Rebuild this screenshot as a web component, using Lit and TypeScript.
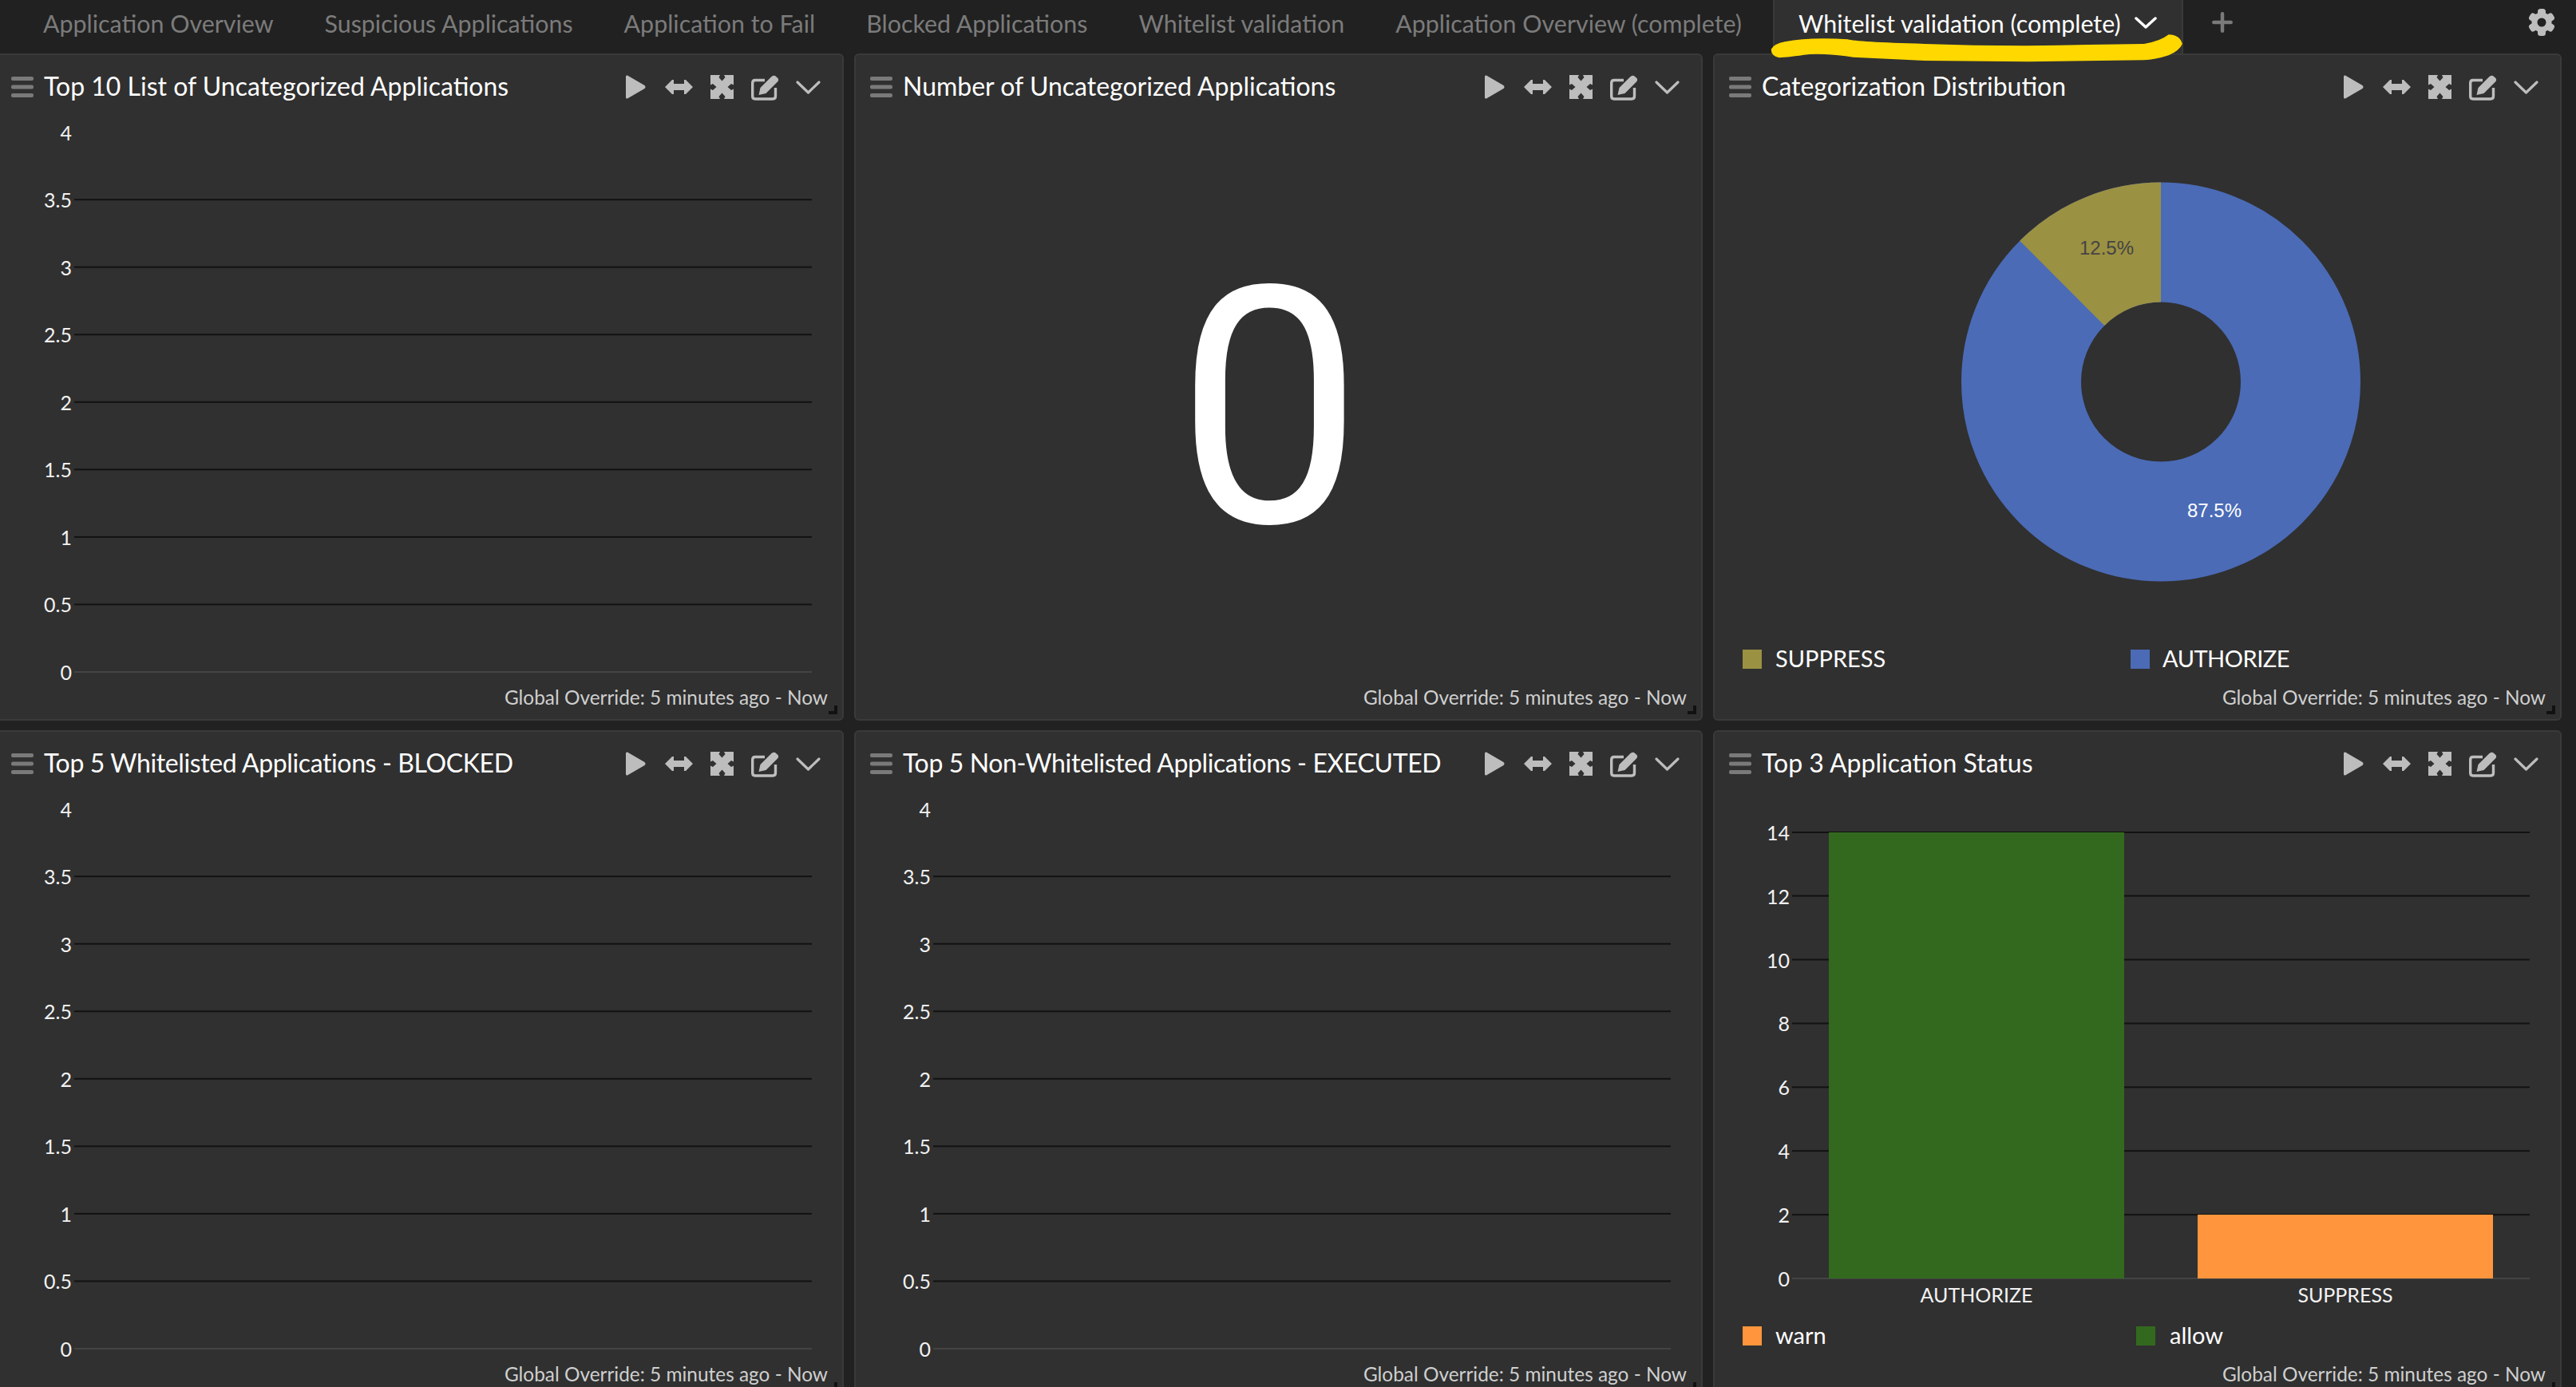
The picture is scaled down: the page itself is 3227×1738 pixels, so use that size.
import { LitElement, html, css, svg } from "lit";
import { customElement } from "lit/decorators.js";
import { classMap } from "lit/directives/class-map.js";

const TABS = [
  "Application Overview",
  "Suspicious Applications",
  "Application to Fail",
  "Blocked Applications",
  "Whitelist validation",
  "Application Overview (complete)",
];

const playIcon = html`<svg class="ic" style="width:25px;height:30px" viewBox="0 0 25 30"><path fill="#bdbdbd" d="M2 0.5 L23.5 13 Q25.5 15 23.5 17 L2 29.5 Q0 30 0 28 V2 Q0 0 2 .5Z"/></svg>`;
const arrowsIcon = html`<svg class="ic" style="width:35px;height:18px" viewBox="0 0 35 18"><path fill="#bdbdbd" d="M0 9 L9 0 H11 V5 H24 V0 H26 L35 9 L26 18 H24 V13 H11 V18 H9Z"/></svg>`;
const expandIcon = html`<svg class="ic" style="width:29px;height:30px" viewBox="0 0 29 30"><path fill="#bdbdbd" fill-rule="evenodd" d="M0 0H29V30H0Z M12 0 H17 L18.500 3 L14.500 7.500 L10.500 3Z M0 12.500 L3 11 L7.500 15 L3 19 L0 17.500Z M29 12.500 L26 11 L21.500 15 L26 19 L29 17.500Z M12 30 H17 L18.500 27 L14.500 22.500 L10.500 27Z"/></svg>`;
const editIcon = html`<svg class="ic" style="width:35px;height:33px" viewBox="0 0 35 33"><path fill="none" stroke="#bdbdbd" stroke-width="3.400" d="M17 7.500 H5 Q1.700 7.500 1.700 11 V27.500 Q1.700 31 5 31 H27 Q30.500 31 30.500 27.500 V17"/><path fill="#bdbdbd" d="M9.500 26 L11.500 17 L25.500 3 Q28 1 30 2 L33.500 5 Q35 7.500 33 9.500 L18.500 24Z"/></svg>`;
const chevIcon = html`<svg class="ic" style="width:31px;height:17px" viewBox="0 0 31 17"><path fill="none" stroke="#bdbdbd" stroke-width="3.200" stroke-linecap="round" stroke-linejoin="round" d="M2 2 L15.500 15 L29 2"/></svg>`;

function axis(ticks: string[], y0: number, step: number) {
  return ticks.map((t, i) => {
    const y = y0 - i * step;
    return svg`
      ${i === ticks.length - 1 ? "" : svg`<rect class=${i === 0 ? "base" : "grid"} x="99" y=${y - 1} width="924" height="2"></rect>`}
      <text class="tick" x="96" y=${y} text-anchor="end" dominant-baseline="central">${t}</text>`;
  });
}

function lineChart() {
  const ticks = ["0", "0.5", "1", "1.5", "2", "2.5", "3", "3.5", "4"];
  return html`<svg class="chart" viewBox="0 0 1063 699">${axis(ticks, 693, 84.55)}</svg>`;
}

function numberChart() {
  return html`<div class="bignum">0</div>`;
}

function donut() {
  const cx = 561, cy = 329.6, R = 250, r = 100;
  const d = R * Math.SQRT1_2, e = r * Math.SQRT1_2;
  return html`<svg class="chart" viewBox="0 0 1063 699">
    <circle cx=${cx} cy=${cy} r=${(R + r) / 2} fill="none" stroke="#4b6bb7" stroke-width=${R - r}></circle>
    <path fill="#9b9142" d="M${cx} ${cy - R} A${R} ${R} 0 0 0 ${cx - d} ${cy - d} L${cx - e} ${cy - e} A${r} ${r} 0 0 1 ${cx} ${cy - r}Z"></path>
    <text class="pct" x="459" y="170" fill="#444">12.5%</text>
    <text class="pct" x="594" y="499" fill="#fff">87.5%</text>
    <rect x="37" y="665" width="24" height="24" fill="#9b9142"></rect>
    <text class="leg" x="78" y="675" dominant-baseline="central">SUPPRESS</text>
    <rect x="523" y="665" width="24" height="24" fill="#4b6bb7"></rect>
    <text class="leg caps" x="563" y="675" dominant-baseline="central">AUTHORIZE</text>
  </svg>`;
}

function bars() {
  const ticks = ["0", "2", "4", "6", "8", "10", "12", "14"];
  return html`<svg class="chart" viewBox="0 0 1063 699">
    ${axis(ticks, 605, 79.9).slice(0, 7)}
    <rect class="grid" x="99" y="45" width="924" height="2"></rect>
    <text class="tick" x="96" y="46" text-anchor="end" dominant-baseline="central">14</text>
    <rect x="145" y="46" width="370" height="559" fill="#33691e"></rect>
    <rect x="607" y="525" width="370" height="80" fill="#ff953c"></rect>
    <text class="tick" x="330" y="625" text-anchor="middle" dominant-baseline="central">AUTHORIZE</text>
    <text class="tick" x="792" y="625" text-anchor="middle" dominant-baseline="central">SUPPRESS</text>
    <rect x="37" y="665" width="24" height="24" fill="#ff953c"></rect>
    <text class="leg" x="78" y="675" dominant-baseline="central">warn</text>
    <rect x="530" y="665" width="24" height="24" fill="#33691e"></rect>
    <text class="leg" x="572" y="675" dominant-baseline="central">allow</text>
  </svg>`;
}

const PANELS = [
  { title: "Top 10 List of Uncategorized Applications", body: lineChart, tight: false },
  { title: "Number of Uncategorized Applications", body: numberChart, tight: false },
  { title: "Categorization Distribution", body: donut, tight: false },
  { title: "Top 5 Whitelisted Applications - BLOCKED", body: lineChart, tight: true },
  { title: "Top 5 Non-Whitelisted Applications - EXECUTED", body: lineChart, tight: true },
  { title: "Top 3 Application Status", body: bars, tight: false },
];

@customElement("app-root")
export class AppRoot extends LitElement {
  static styles = css`
    :host {
      display: block;
      position: relative;
      width: 3227px;
      height: 1738px;
      overflow: hidden;
      background: #212121;
      font-family: Lato, "Noto Sans", sans-serif;
      color: #fff;
    }
    .topbar {
      display: flex;
      align-items: stretch;
      height: 67px;
      padding-left: 22px;
      box-sizing: border-box;
    }
    .tab {
      display: flex;
      align-items: center;
      padding: 0 32px 10px;
      font-size: 30.4px;
      color: #7b7b7b;
      white-space: nowrap;
    }
    .tab.active {
      position: absolute;
      left: 2221px;
      top: 0;
      height: 67px;
      width: 514px;
      box-sizing: border-box;
      justify-content: flex-start;
      gap: 17px;
      padding: 0 30px 10px;
      color: #fff;
      background: #303030;
      border: 2px solid #3a3a3a;
      border-top: 0;
      border-bottom: 0;
    }
    .plus {
      position: absolute;
      left: 2771px;
      top: 15px;
    }
    .gear {
      position: absolute;
      left: 3167px;
      top: 11px;
    }
    .grid-wrap {
      display: grid;
      grid-template-columns: repeat(3, 1063px);
      grid-template-rows: repeat(2, 836px);
      column-gap: 13px;
      row-gap: 12px;
      margin-left: -6px;
    }
    .panel {
      position: relative;
      display: flex;
      flex-direction: column;
      box-sizing: border-box;
      background: #303030;
      border: 2px solid #3a3a3a;
      border-radius: 6px;
    }
    .head {
      display: flex;
      align-items: center;
      height: 80px;
      padding: 0 27px 0 18px;
      flex: none;
    }
    .burger {
      width: 28px;
      height: 26px;
      flex: none;
      margin-right: 13px;
    }
    .title {
      flex: 1;
      font-size: 32px;
      color: #fff;
      white-space: nowrap;
      padding-bottom: 3px;
    }
    .title.tight { letter-spacing: -0.38px; }
    .icons {
      display: flex;
      align-items: center;
      height: 36px;
    }
    .ic {
      display: block;
      flex: none;
    }
    .ibox {
      display: flex;
      justify-content: center;
    }
    .ibox.a { margin-left: 24px; }
    .ibox.b { margin-left: 22px; }
    .ibox.c { margin-left: 21px; }
    .body {
      flex: 1;
      min-height: 0;
      margin: 0 -2px;
      position: relative;
    }
    .chart {
      display: block;
      width: 1063px;
      height: 699px;
      overflow: visible;
    }
    .grid { fill: #121212; }
    .base { fill: #444444; }
    .tick { font-size: 25px; fill: #f2f2f2; font-family: Lato, sans-serif; }
    .leg { font-size: 29px; fill: #ffffff; font-family: Lato, sans-serif; }
    .leg.caps { letter-spacing: -0.5px; }
    .pct { font-size: 24px; font-family: "Liberation Sans", Arial, sans-serif; }
    .bignum {
      height: 699px;
      display: flex;
      align-items: center;
      justify-content: center;
      padding: 28px 22px 0 0;
      box-sizing: border-box;
      font-family: Roboto, "Open Sans", sans-serif;
      font-size: 415px;
      line-height: 1;
      color: #fff;
    }
    .foot {
      flex: none;
      height: 53px;
      display: flex;
      align-items: flex-start;
      justify-content: flex-end;
      padding: 11px 18px 0 0;
      box-sizing: border-box;
      font-size: 24.4px;
      line-height: 30px;
      color: #cfcfcf;
      white-space: nowrap;
    }
    .resize {
      position: absolute;
      right: 6px;
      bottom: 6px;
      width: 11px;
      height: 11px;
    }
    .marker {
      position: absolute;
      left: 2150px;
      top: 0;
      width: 1077px;
      height: 200px;
      pointer-events: none;
    }
  `;

  render() {
    return html`
      <div class="topbar">
        ${TABS.map((t) => html`<div class="tab">${t}</div>`)}
        <div class="tab active">
          Whitelist validation (complete)
          <svg class="ic" style="width:28px;height:15px" viewBox="0 0 28 15"><path fill="none" stroke="#fff" stroke-width="3.500" stroke-linecap="round" stroke-linejoin="round" d="M2 2 L14 13 L26 2"/></svg>
        </div>
        <svg class="plus" width="26" height="26" viewBox="0 0 26 26"><path stroke="#7a7a7a" stroke-width="4.500" stroke-linecap="round" d="M13 2.300V23.700M2.300 13H23.700"/></svg>
        <svg class="gear" width="34" height="34" viewBox="0 0 34 34">
          <g fill="#bdbdbd">
            <circle cx="17" cy="17" r="12.500"></circle>
            <rect x="12" y="0" width="10" height="34" rx="3.500"></rect>
            <rect x="12" y="0" width="10" height="34" rx="3.500" transform="rotate(60 17 17)"></rect>
            <rect x="12" y="0" width="10" height="34" rx="3.500" transform="rotate(120 17 17)"></rect>
          </g>
          <circle cx="17" cy="17" r="5.500" fill="#212121"></circle>
        </svg>
      </div>
      <div class="grid-wrap">
        ${PANELS.map(
          (p) => html`<section class="panel">
            <header class="head">
              <svg class="burger" viewBox="0 0 28 26"><g fill="#7a7a7a"><rect width="28" height="5" rx="2"></rect><rect y="10.500" width="28" height="5" rx="2"></rect><rect y="21" width="28" height="5" rx="2"></rect></g></svg>
              <div class=${classMap({ title: true, tight: p.tight })}>${p.title}</div>
              <div class="icons">
                ${playIcon}
                <div class="ibox a">${arrowsIcon}</div>
                <div class="ibox b">${expandIcon}</div>
                <div class="ibox b">${editIcon}</div>
                <div class="ibox c">${chevIcon}</div>
              </div>
            </header>
            <div class="body">${p.body()}</div>
            <footer class="foot">Global Override: 5 minutes ago - Now</footer>
            <svg class="resize" viewBox="0 0 11 11"><path fill="#111" d="M7 0h4v11H0V7h7z"></path></svg>
          </section>`
        )}
      </div>
      <svg class="marker" viewBox="0 0 1568 600" preserveAspectRatio="none">
        <path fill="#ffd800" d="M100 185 Q105 165 125 157 Q170 138 240 148 Q255 158 380 165 Q470 172 560 172 Q680 168 780 165 Q810 155 825 130 Q845 130 850 165 Q845 190 825 208 Q800 225 780 226 L570 232 L380 228 L250 215 Q200 200 170 204 Q130 215 115 217 Q100 210 100 185Z"></path>
      </svg>
    `;
  }
}
